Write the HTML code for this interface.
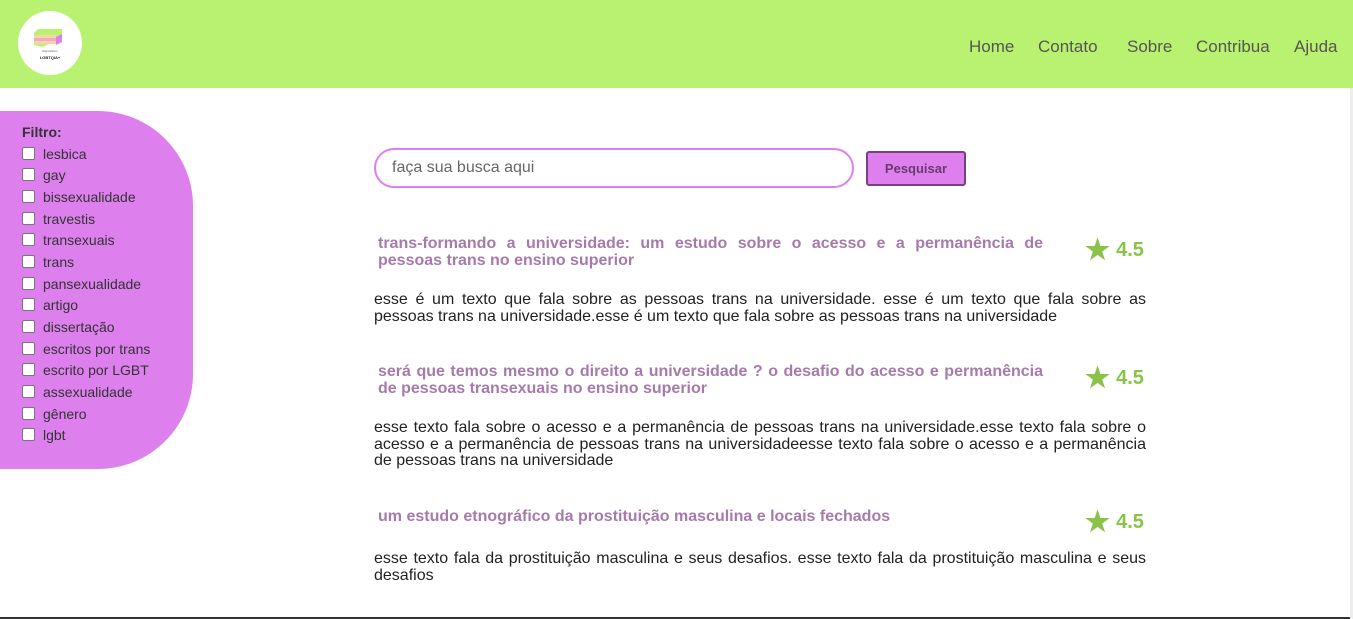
<!DOCTYPE html>
<html><head><meta charset="utf-8"><style>
body{margin:0;width:1353px;height:619px;overflow:hidden;font-family:"Liberation Sans",sans-serif;background:#fff;position:relative}
.hdr{position:absolute;left:0;top:0;width:1353px;height:88px;background:#b9f170}
.logo{position:absolute;left:18px;top:11px;width:64px;height:64px;border-radius:50%;background:#fff}
nav{position:absolute;top:37px;font-size:17px;color:#555}
nav span{position:absolute;white-space:nowrap}
.side{position:absolute;left:0;top:111px;width:193px;height:358px;background:#dd80ee;border-radius:0 95px 95px 0}
.side .t{position:absolute;left:22px;top:13px;font-weight:bold;font-size:14px;color:#333}
.side .i{position:absolute;left:22px;font-size:14px;color:#333}
.side .i b{display:inline-block;width:11px;height:11px;background:#fff;border:1px solid #777;border-radius:2px;margin-right:8px;vertical-align:-1px}
.search{position:absolute;left:374px;top:148px;width:476px;height:36px;border:2px solid #dd80ee;border-radius:20px;box-sizing:content-box}
.search span{position:absolute;left:16px;top:9px;font-size:16px;color:#666}
.btn{position:absolute;left:866px;top:151px;width:96px;height:31px;background:#dd80ee;border:2px solid #7a3f80;border-radius:3px;font-size:13px;font-weight:bold;color:#6b3a70;text-align:center;line-height:31px;box-sizing:content-box}
.ti{position:absolute;left:378px;width:665px;font-size:16px;font-weight:bold;color:#a67bab;text-align:justify;line-height:17px}
.st{position:absolute;left:1085px;font-size:20px;font-weight:bold;color:#8bc34a}
.st i{font-style:normal;font-size:28px;vertical-align:-3px;margin-right:6px}
.tx{position:absolute;left:374px;width:772px;font-size:16px;color:#222;text-align:justify;line-height:16.5px}
</style></head><body>
<div class="hdr">
<div class="logo"><svg width="64" height="64" viewBox="0 0 64 64">
<polygon points="16,22 20,18 44,18 44,28 24,36 16,34" fill="#b9f170"/>
<rect x="16" y="24" width="22" height="3" fill="#f5d6a0"/><rect x="16" y="27" width="22" height="3" fill="#f3a8c8"/><rect x="16" y="30" width="22" height="3" fill="#f5d6a0"/>
<polygon points="38,26 44,23 44,31 38,34" fill="#dd80ee"/>
<text x="32" y="41" font-size="3" text-anchor="middle" fill="#555">Repositório</text>
<text x="32" y="48" font-size="4" font-weight="bold" text-anchor="middle" fill="#222">LGBTQIA+</text></svg></div>
<nav><span style="left:969px">Home</span><span style="left:1038px">Contato</span><span style="left:1127px">Sobre</span><span style="left:1196px">Contribua</span><span style="left:1294px">Ajuda</span></nav>
</div>
<div class="side"><div class="t">Filtro:</div>
<div class="i" style="top:35px"><b></b>lesbica</div>
<div class="i" style="top:56px"><b></b>gay</div>
<div class="i" style="top:78px"><b></b>bissexualidade</div>
<div class="i" style="top:100px"><b></b>travestis</div>
<div class="i" style="top:121px"><b></b>transexuais</div>
<div class="i" style="top:143px"><b></b>trans</div>
<div class="i" style="top:165px"><b></b>pansexualidade</div>
<div class="i" style="top:186px"><b></b>artigo</div>
<div class="i" style="top:208px"><b></b>dissertação</div>
<div class="i" style="top:230px"><b></b>escritos por trans</div>
<div class="i" style="top:251px"><b></b>escrito por LGBT</div>
<div class="i" style="top:273px"><b></b>assexualidade</div>
<div class="i" style="top:295px"><b></b>gênero</div>
<div class="i" style="top:316px"><b></b>lgbt</div>
</div>
<div class="search"><span>faça sua busca aqui</span></div>
<div class="btn">Pesquisar</div>
<div class="ti" style="top:235px">trans-formando a universidade: um estudo sobre o acesso e a permanência de pessoas trans no ensino superior</div>
<div class="st" style="top:233px"><i>★</i>4.5</div>
<div class="tx" style="top:292px">esse é um texto que fala sobre as pessoas trans na universidade. esse é um texto que fala sobre as pessoas trans na universidade.esse é um texto que fala sobre as pessoas trans na universidade</div>
<div class="ti" style="top:363px">será que temos mesmo o direito a universidade ? o desafio do acesso e permanência de pessoas transexuais no ensino superior</div>
<div class="st" style="top:361px"><i>★</i>4.5</div>
<div class="tx" style="top:420px">esse texto fala sobre o acesso e a permanência de pessoas trans na universidade.esse texto fala sobre o acesso e a permanência de pessoas trans na universidadeesse texto fala sobre o acesso e a permanência de pessoas trans na universidade</div>
<div class="ti" style="top:508px">um estudo etnográfico da prostituição masculina e locais fechados</div>
<div class="st" style="top:505px"><i>★</i>4.5</div>
<div class="tx" style="top:551px">esse texto fala da prostituição masculina e seus desafios. esse texto fala da prostituição masculina e seus desafios</div>
<div style="position:absolute;left:0;top:617px;width:1353px;height:2px;background:#333"></div>
<div style="position:absolute;left:1350px;top:88px;width:3px;height:531px;background:#eee"></div>
</body></html>
